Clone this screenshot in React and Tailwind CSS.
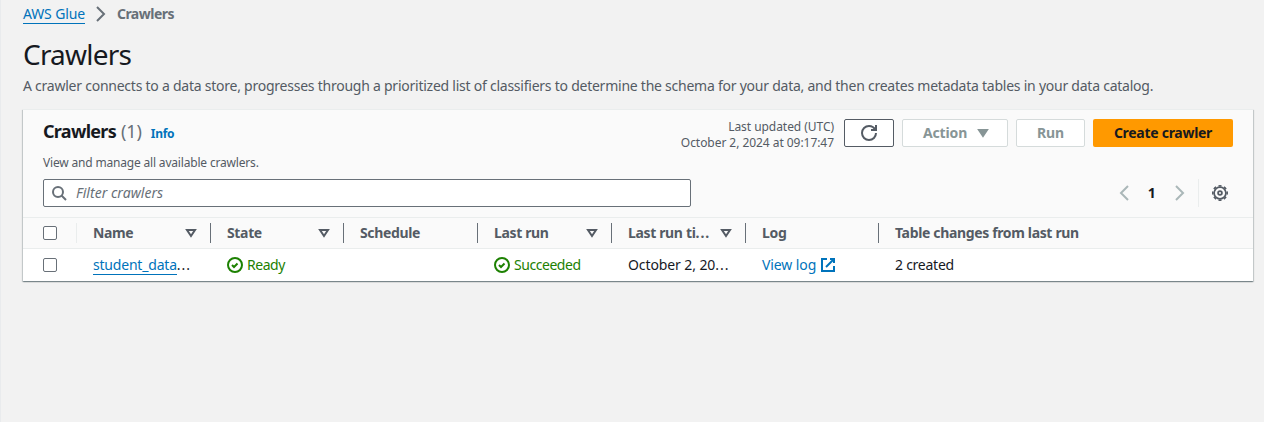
import React from 'react';

function Icon({ children, className = '' }) {
  return (
    <svg viewBox="0 0 16 16" fill="none" stroke="currentColor" strokeWidth="2" className={`size-4 shrink-0 ${className}`}>
      {children}
    </svg>
  );
}

const Check = () => (
  <Icon>
    <circle cx="8" cy="8" r="7" />
    <path d="m5 8 2 2 3.521-3.521" />
  </Icon>
);

const Sort = () => (
  <Icon className="mr-[11px]">
    <path d="M4 5h8l-4 6-4-6z" />
  </Icon>
);

const Dots = () => <span className="tracking-[1px]">...</span>;

function Status({ children }) {
  return (
    <span className="flex items-center gap-1 tracking-[-0.45px] text-[#1d8102]">
      <Check />
      {children}
    </span>
  );
}

function Head({ label, sort, divider = true }) {
  return (
    <div className="flex h-full items-center justify-between">
      <span className="whitespace-nowrap">{label}</span>
      <span className="flex items-center">
        {sort && <Sort />}
        {divider && <span className="h-5 w-px bg-[#687078]" />}
      </span>
    </div>
  );
}

const Checkbox = () => <span className="block size-3.5 rounded-[2px] border border-[#687078] bg-white" />;

const columns =
  'grid grid-cols-[34px_118px_117px_118px_118px_118px_117px_1fr] gap-x-4 items-center pl-5';

export default function App() {
  return (
    <div className="h-[422px] w-[1264px] overflow-hidden border-l border-[#e9ebed] bg-[#f2f2f2] pl-[22px] pr-[11px] font-['Noto_Sans',sans-serif] text-[14px] leading-[22px] tracking-[-0.35px] text-[#16191f]">
      <nav className="flex h-[25px] items-start pt-[3px] text-[14px]">
        <a className="h-[21px] border-b border-[#0073bb] tracking-[-0.15px] text-[#0073bb]">AWS Glue</a>
        <Icon className="ml-2 mt-[3px] text-[#687078]">
          <path d="m4 1 7 7-7 7" />
        </Icon>
        <span className="ml-2 font-bold tracking-[-0.5px] text-[#687078]">Crawlers</span>
      </nav>
      <h1 className="mt-[11px] text-[28px] leading-9 tracking-[-0.8px]">Crawlers</h1>
      <p className="mt-[3px] whitespace-nowrap tracking-[-0.242px] text-[#545b64]">
        A crawler connects to a data store, progresses through a prioritized list of classifiers to determine the schema for your data, and then creates metadata tables in your data catalog.
      </p>

      <section className="mt-3 h-[172px] w-[1230px] bg-white shadow-[0_1px_1px_0_rgba(0,28,36,0.3),1px_1px_1px_0_rgba(0,28,36,0.15),-1px_1px_1px_0_rgba(0,28,36,0.15)]">
        <div className="h-[108px] border-t border-[#eaeded] bg-[#fafafa] px-5 pt-[9px]">
          <div className="flex h-[33px] items-start justify-between">
            <div className="flex items-baseline pt-px">
              <h2 className="text-[18px] font-bold leading-[22px] tracking-[-0.7px]">
                Crawlers <span className="ml-px font-normal tracking-[-0.1px] text-[#687078]">(1)</span>
              </h2>
              <a className="ml-[9px] text-[12px] font-bold tracking-[-0.3px] text-[#0073bb]">Info</a>
            </div>
            <div className="flex items-start">
              <p className="text-right text-[12px] leading-4 tracking-[-0.05px] text-[#545b64]">
                Last updated (UTC)
                <br />
                October 2, 2024 at 09:17:47
              </p>
              <button className="ml-2.5 flex h-7 w-[50px] items-center justify-center rounded-[2px] border border-[#545b64] bg-white text-[#545b64]">
                <Icon>
                  <path d="M15 8c0 3.87-3.13 7-7 7s-7-3.13-7-7 3.13-7 7-7c2.79 0 5.2 1.63 6.33 4" />
                  <path d="M10 5h5V0" />
                </Icon>
              </button>
              <button className="ml-2 flex h-7 w-[106px] items-center rounded-[2px] border border-[#d5dbdb] bg-white pl-5 font-bold tracking-[-0.15px] text-[#879596]">
                Action
                <Icon className="ml-2">
                  <path d="M4 5h8l-4 6-4-6z" fill="currentColor" />
                </Icon>
              </button>
              <button className="ml-2 h-7 w-[69px] rounded-[2px] border border-[#d5dbdb] bg-white font-bold tracking-[-0.2px] text-[#879596]">Run</button>
              <button className="ml-2 h-7 w-[140px] rounded-[2px] bg-[#ff9900] font-bold tracking-[-0.28px]">Create crawler</button>
            </div>
          </div>
          <p className="text-[12px] tracking-[-0.18px] text-[#545b64]">View and manage all available crawlers.</p>
          <div className="mt-[5px] flex items-center justify-between">
            <div className="flex h-7 w-[648px] items-center rounded-[2px] border border-[#687078] bg-white pl-[7px] text-[#687078]">
              <Icon>
                <circle cx="7" cy="7" r="5" />
                <path d="m15 15-4.5-4.5" />
              </Icon>
              <span className="ml-[9px] italic tracking-[0.03px]">Filter crawlers</span>
            </div>
            <div className="flex h-7 items-center pr-[5px]">
              <Icon className="text-[#aab7b8]">
                <path d="m12 1-7 7 7 7" />
              </Icon>
              <span className="w-[39px] text-center font-bold">1</span>
              <Icon className="text-[#aab7b8]">
                <path d="m5 1 7 7-7 7" />
              </Icon>
              <span className="ml-[11px] h-7 w-px bg-[#eaeded]" />
              <Icon className="ml-[13px] text-[#545b64]">
                <circle cx="8" cy="8" r="5.9" strokeWidth="1.7" />
                <circle cx="8" cy="8" r="7.2" strokeWidth="1.6" pathLength="16" strokeDasharray="1.1 0.9" strokeDashoffset="0.55" />
                <circle cx="8" cy="8" r="1.9" strokeWidth="1.8" />
              </Icon>
            </div>
          </div>
        </div>

        <div className={`${columns} h-8 border-y border-[#eaeded] bg-[#fafafa] font-bold text-[#545b64]`}>
          <div className="flex items-center justify-between">
            <Checkbox />
            <span className="h-5 w-px bg-[#eaeded]" />
          </div>
          <Head label="Name" sort />
          <Head label="State" sort />
          <Head label="Schedule" />
          <Head label="Last run" sort />
          <Head label={<>Last run ti<Dots /></>} sort />
          <Head label="Log" />
          <Head label="Table changes from last run" divider={false} />
        </div>
        <div className={`${columns} h-8`}>
          <Checkbox />
          <span className="whitespace-nowrap">
            <a className="inline-block h-[21px] border-b border-[#0073bb] leading-[21px] tracking-[-0.2px] text-[#0073bb]">student_data</a>
            <Dots />
          </span>
          <Status>Ready</Status>
          <span />
          <Status>Succeeded</Status>
          <span className="whitespace-nowrap tracking-[-0.1px]">October 2, 20<Dots /></span>
          <a className="flex items-center gap-1 tracking-[-0.1px] text-[#0073bb]">
            View log
            <Icon>
              <path d="M10 2h4v4" />
              <path d="m6 10 8-8" />
              <path d="M14 9.048V14H2V2h5" />
            </Icon>
          </a>
          <span className="tracking-[-0.25px]">2 created</span>
        </div>
      </section>
    </div>
  );
}
